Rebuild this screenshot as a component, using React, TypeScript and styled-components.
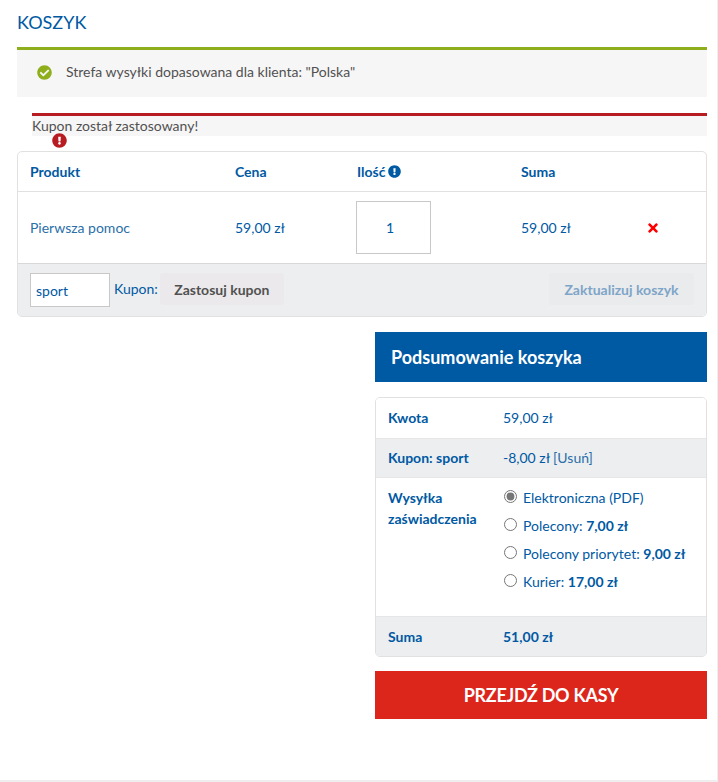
import styled, { createGlobalStyle } from "styled-components";
import { FaCheckCircle, FaExclamationCircle, FaTimes } from "react-icons/fa";

const BLUE = "#0059a3";
const COLUMNS = "205px 122px 164px 1fr";

const SHIPPING = [
  { id: "pdf", label: "Elektroniczna (PDF)", checked: true },
  { id: "polecony", label: "Polecony:", price: "7,00 zł" },
  { id: "priorytet", label: "Polecony priorytet:", price: "9,00 zł" },
  { id: "kurier", label: "Kurier:", price: "17,00 zł" },
];

const GlobalStyle = createGlobalStyle`
  * {
    box-sizing: border-box;
  }

  body {
    margin: 0;
    background: #fff;
    font-family: Lato, "Liberation Sans", sans-serif;
    font-size: 14px;
    color: #444;
  }
`;

export default function App() {
  return (
    <Page>
      <GlobalStyle />
      <Title>KOSZYK</Title>

      <ZoneNotice>
        <FaCheckCircle size={15} color="#8fae1b" />
        Strefa wysyłki dopasowana dla klienta: "Polska"
      </ZoneNotice>

      <CouponNotice>
        Kupon został zastosowany!
        <NoticeIcon>
          <FaExclamationCircle size={15} color="#b81c23" />
        </NoticeIcon>
      </CouponNotice>

      <CartTable>
        <HeadRow>
          <span>Produkt</span>
          <span>Cena</span>
          <QtyHead>
            Ilość
            <FaExclamationCircle size={13} />
          </QtyHead>
          <span>Suma</span>
        </HeadRow>
        <ItemRow>
          <ProductLink href="#">Pierwsza pomoc</ProductLink>
          <span>59,00 zł</span>
          <QtyBox>1</QtyBox>
          <ItemTotal>
            <span>59,00 zł</span>
            <RemoveLink href="#" aria-label="Usuń">
              <FaTimes size={14} />
            </RemoveLink>
          </ItemTotal>
        </ItemRow>
        <ActionsRow>
          <CouponInput defaultValue="sport" />
          <CouponLabel>Kupon:</CouponLabel>
          <ApplyButton>Zastosuj kupon</ApplyButton>
          <UpdateButton disabled>Zaktualizuj koszyk</UpdateButton>
        </ActionsRow>
      </CartTable>

      <Summary>
        <SummaryTitle>Podsumowanie koszyka</SummaryTitle>
        <SummaryTable>
          <SummaryRow>
            <SummaryLabel>Kwota</SummaryLabel>
            <span>59,00 zł</span>
          </SummaryRow>
          <SummaryRow $shaded>
            <SummaryLabel>Kupon: sport</SummaryLabel>
            <span>
              -8,00 zł <RemoveCoupon href="#">[Usuń]</RemoveCoupon>
            </span>
          </SummaryRow>
          <ShippingRow>
            <ShippingLabel>
              Wysyłka
              <br />
              zaświadczenia
            </ShippingLabel>
            <ShippingList>
              {SHIPPING.map((option) => (
                <ShippingOption key={option.id}>
                  <input type="radio" name="shipping" defaultChecked={option.checked} />
                  <span>
                    {option.label} {option.price && <b>{option.price}</b>}
                  </span>
                </ShippingOption>
              ))}
            </ShippingList>
          </ShippingRow>
          <TotalRow $shaded>
            <SummaryLabel>Suma</SummaryLabel>
            <b>51,00 zł</b>
          </TotalRow>
        </SummaryTable>
        <CheckoutButton>PRZEJDŹ DO KASY</CheckoutButton>
      </Summary>
    </Page>
  );
}

const Page = styled.div`
  width: 718px;
  height: 782px;
  padding: 0 10px 0 17px;
  border-right: 1px solid #eee;
  border-bottom: 2px solid #eee;
  overflow: hidden;
`;

const Title = styled.h1`
  margin: 0;
  height: 47px;
  padding-top: 11px;
  font-size: 18px;
  line-height: 22px;
  font-weight: 400;
  color: ${BLUE};
`;

const ZoneNotice = styled.div`
  display: flex;
  align-items: center;
  gap: 14px;
  height: 50px;
  padding: 0 0 3px 20px;
  border-top: 3px solid #8fae1b;
  background: #f7f6f7;
  line-height: 20px;
  color: #515151;
`;

const CouponNotice = styled.div`
  position: relative;
  height: 23px;
  margin: 16px 0 15px 15px;
  border-top: 3px solid #b81c23;
  background: #f7f6f7;
  line-height: 20px;
  color: #515151;
`;

const NoticeIcon = styled.span`
  position: absolute;
  left: 20px;
  top: 17px;
  display: flex;
`;

const CartTable = styled.div`
  height: 166px;
  border: 1px solid #e1e1e1;
  border-radius: 5px;
  overflow: hidden;
  color: ${BLUE};
`;

const HeadRow = styled.div`
  display: grid;
  grid-template-columns: ${COLUMNS};
  align-items: center;
  height: 40px;
  padding-left: 12px;
  border-bottom: 1px solid #e1e1e1;
  font-weight: 700;
`;

const QtyHead = styled.span`
  display: flex;
  align-items: center;
  gap: 3px;
`;

const ItemRow = styled.div`
  display: grid;
  grid-template-columns: ${COLUMNS};
  align-items: center;
  height: 72px;
  padding-left: 12px;
  border-bottom: 1px solid #d8d8d8;
`;

const ProductLink = styled.a`
  color: #2a6fa8;
  text-decoration: none;
`;

const QtyBox = styled.div`
  display: flex;
  align-items: center;
  justify-content: center;
  width: 75px;
  height: 53px;
  margin-left: -1px;
  padding-right: 7px;
  border: 1px solid #c8c8c8;
`;

const ItemTotal = styled.div`
  display: flex;
  align-items: center;
`;

const RemoveLink = styled.a`
  display: flex;
  margin-left: 75px;
  color: #f00;
`;

const ActionsRow = styled.div`
  display: flex;
  align-items: center;
  height: 52px;
  padding: 0 12px;
  background: #edeef0;
`;

const CouponInput = styled.input`
  width: 80px;
  height: 34px;
  padding: 0 5px;
  border: 1px solid #c8c8c8;
  background: #fff;
  font: inherit;
  color: ${BLUE};
  outline: none;
`;

const CouponLabel = styled.span`
  margin: -4px 2px 0 4px;
`;

const ApplyButton = styled.button`
  width: 124px;
  height: 32px;
  margin-top: -2px;
  padding: 0;
  border: 0;
  border-radius: 3px;
  background: #ebe9eb;
  font: 700 14px Lato, sans-serif;
  color: #515151;
`;

const UpdateButton = styled(ApplyButton)`
  width: 145px;
  margin-left: auto;
  background: #eaebed;
  color: #7ea5c8;
`;

const Summary = styled.div`
  width: 332px;
  margin: 15px 0 0 auto;
`;

const SummaryTitle = styled.h2`
  display: flex;
  align-items: center;
  height: 50px;
  margin: 0 0 15px;
  padding-left: 16px;
  background: ${BLUE};
  font-size: 18px;
  font-weight: 700;
  color: #fff;
`;

const SummaryTable = styled.div`
  border: 1px solid #e1e1e1;
  border-radius: 5px;
  overflow: hidden;
  color: ${BLUE};
`;

const SummaryRow = styled.div<{ $shaded?: boolean }>`
  display: grid;
  grid-template-columns: 115px 1fr;
  align-items: center;
  height: 40px;
  padding: 0 0 2px 12px;
  background: ${(props) => (props.$shaded ? "#edeef0" : "#fff")};
  border-top: 1px solid ${(props) => (props.$shaded ? "#e6e6e6" : "transparent")};
  border-bottom: 1px solid ${(props) => (props.$shaded ? "#e6e6e6" : "transparent")};
`;

const TotalRow = styled(SummaryRow)`
  padding-bottom: 0;
  border-bottom: 0;
`;

const SummaryLabel = styled.span`
  font-weight: 700;
`;

const RemoveCoupon = styled.a`
  color: #2a6fa8;
  text-decoration: none;
`;

const ShippingRow = styled.div`
  display: grid;
  grid-template-columns: 115px 1fr;
  height: 138px;
  padding: 9px 0 0 12px;
`;

const ShippingLabel = styled.span`
  font-weight: 700;
  line-height: 21px;
`;

const ShippingList = styled.div`
  display: flex;
  flex-direction: column;
  margin-top: -4px;
`;

const ShippingOption = styled.label`
  display: flex;
  align-items: center;
  height: 28px;

  input {
    width: 13px;
    height: 13px;
    margin: 0 6px 0 1px;
    position: relative;
    top: -1px;
    accent-color: #767676;
  }
`;

const CheckoutButton = styled.button`
  display: block;
  width: 100%;
  height: 48px;
  margin-top: 14px;
  padding: 0;
  border: 0;
  background: #dc261c;
  font: 700 18px Lato, sans-serif;
  letter-spacing: -0.3px;
  color: #fff;
`;
